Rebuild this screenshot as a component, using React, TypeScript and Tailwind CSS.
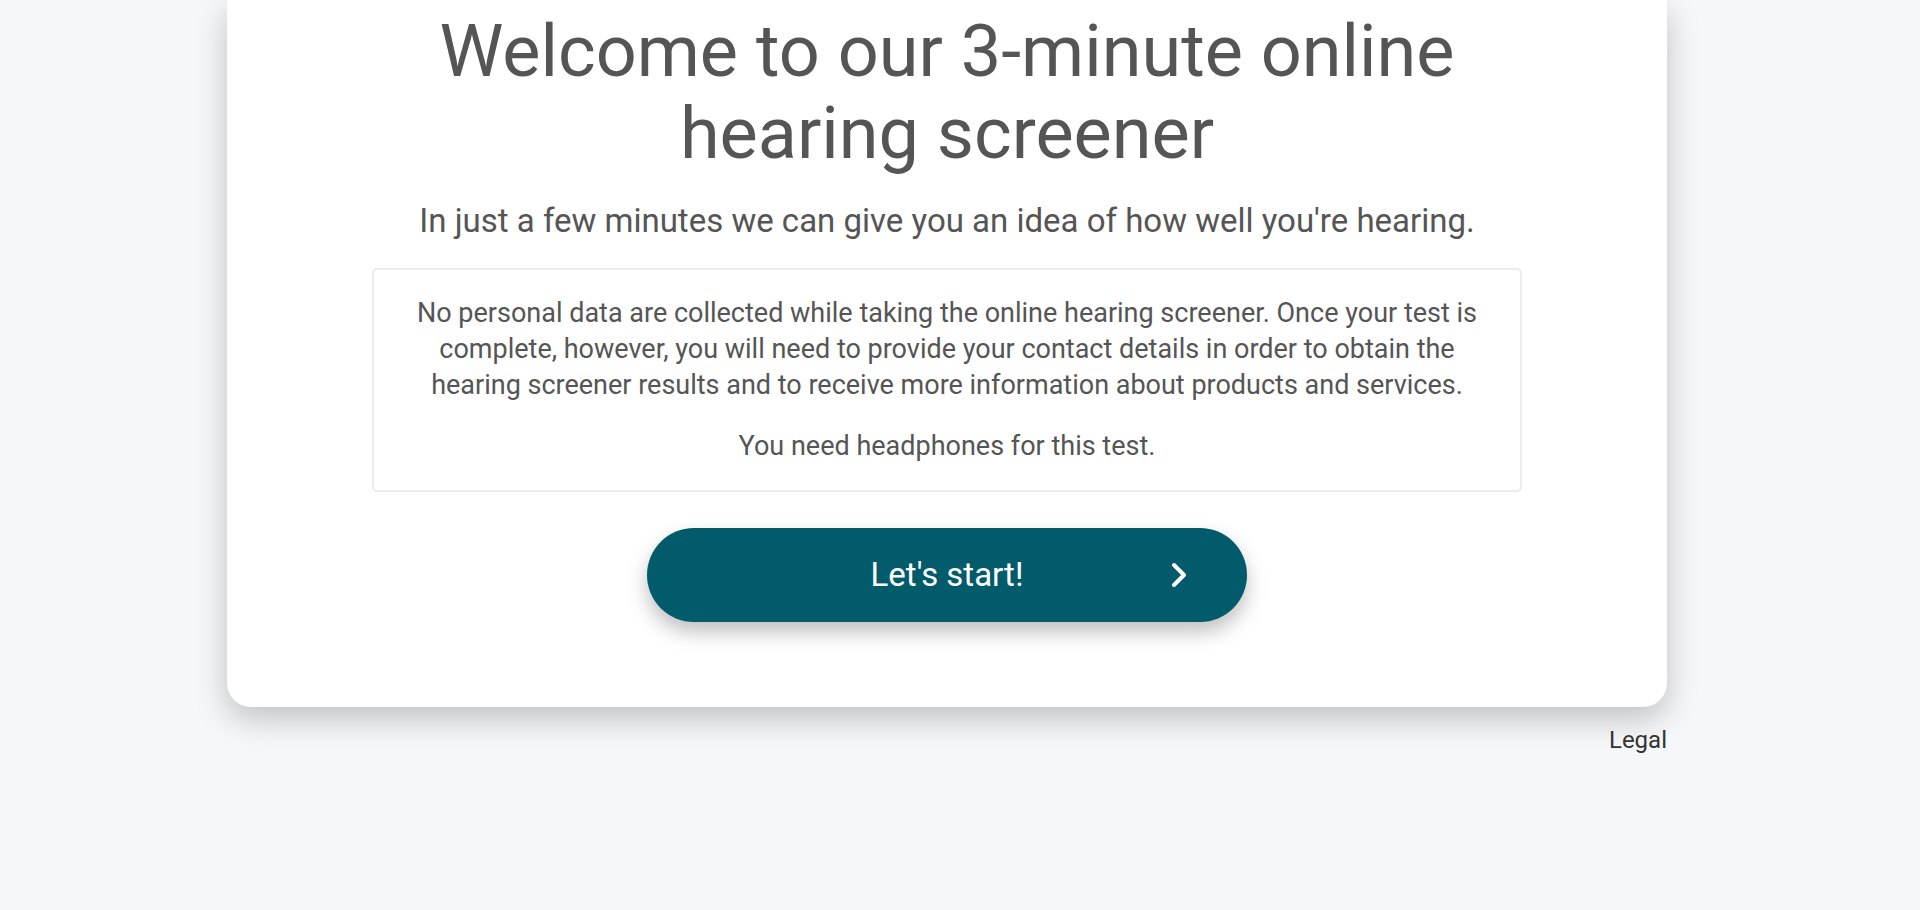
export default function App() {
  return (
    <div
      className="min-h-[910px] bg-[#f6f7f9] text-[#555555]"
      style={{ fontFamily: "Roboto, 'Liberation Sans', sans-serif" }}
    >
      <div className="ml-[227px] w-[1440px]">
        <div className="rounded-b-[24px] bg-white pt-[11px] pb-[85px] shadow-[0_12px_32px_rgba(0,0,0,0.22)] flex flex-col items-center">
          <h1 className="text-center text-[72px] leading-[82px] font-normal text-[#555555]">
            Welcome to our 3-minute online
            <br />
            hearing screener
          </h1>
          <p className="mt-[26px] text-center text-[33px] leading-[40px] text-[#555555]">
            In just a few minutes we can give you an idea of how well you're hearing.
          </p>
          <div className="mt-[27px] w-[1150px] rounded-[5px] border-2 border-[#ececec] px-[38px] pt-[25px] pb-[26px] text-center text-[27px] leading-[36px] text-[#555555]">
            <p>
              No personal data are collected while taking the online hearing screener. Once your test is
              complete, however, you will need to provide your contact details in order to obtain the
              hearing screener results and to receive more information about products and services.
            </p>
            <p className="mt-[25px]">You need headphones for this test.</p>
          </div>
          <button className="relative mt-[36px] flex h-[94px] w-[600px] items-center justify-center rounded-full bg-[#025b6a] text-[33px] text-white shadow-[0_10px_20px_rgba(0,0,0,0.25)]">
            Let's start!
            <svg
              className="absolute right-[60px] top-1/2 -translate-y-1/2"
              width="16"
              height="26"
              viewBox="0 0 16 26"
              fill="none"
              stroke="white"
              strokeWidth="4"
              strokeLinecap="round"
              strokeLinejoin="round"
            >
              <path d="M3 3l10 10-10 10" />
            </svg>
          </button>
        </div>
        <div className="mt-[19px] text-right text-[24px] leading-[28px] text-[#333333]">
          Legal
        </div>
      </div>
    </div>
  );
}
